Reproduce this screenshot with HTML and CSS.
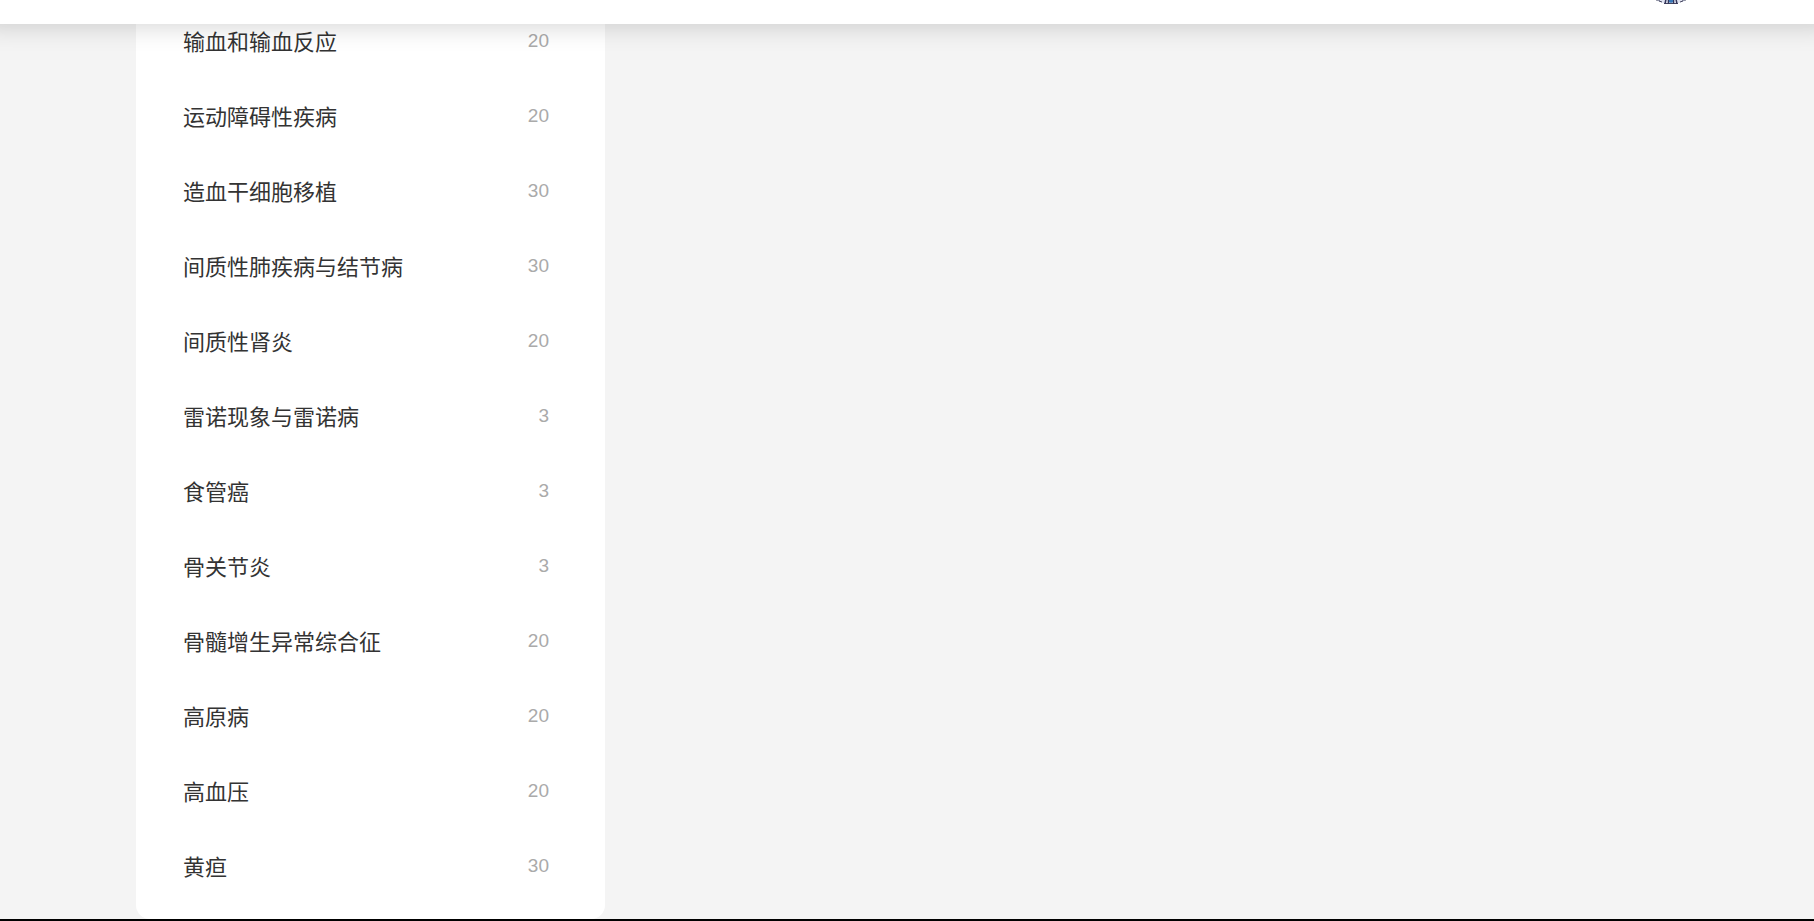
FILE: index.html
```html
<!DOCTYPE html>
<html lang="zh-CN">
<head>
    <meta charset="UTF-8">
    <meta name="viewport" content="width=device-width, initial-scale=1.0">
    <title>疾病分类</title>
    <link rel="stylesheet" href="styles.css">
</head>
<body>
    <header class="topbar">
        <svg class="emblem" width="30" height="30" viewBox="0 0 30 30" aria-hidden="true">
            <path d="M1 0H29V27Q22 30 15 30Q8 30 1 27Z" fill="#dfe2f0"/>
            <path d="M0 26H4M26 26H30M3 27L6 28M27 27L24 28M8 29.500H22" stroke="#45465f" stroke-width="1" fill="none"/>
            <path d="M10 25L9 30M12.500 25V30M17.500 25V30M20 25L21 30" stroke="#34365a" stroke-width="1.500" fill="none"/>
            <path d="M13 24H17V28L15 29L13 28Z" fill="#3a78b8"/>
        </svg>
    </header>
    <main class="page">
        <ul class="category-list">
            <li><a href="#"><span class="name">输血和输血反应</span><span class="count">20</span></a></li>
            <li><a href="#"><span class="name">运动障碍性疾病</span><span class="count">20</span></a></li>
            <li><a href="#"><span class="name">造血干细胞移植</span><span class="count">30</span></a></li>
            <li><a href="#"><span class="name">间质性肺疾病与结节病</span><span class="count">30</span></a></li>
            <li><a href="#"><span class="name">间质性肾炎</span><span class="count">20</span></a></li>
            <li><a href="#"><span class="name">雷诺现象与雷诺病</span><span class="count">3</span></a></li>
            <li><a href="#"><span class="name">食管癌</span><span class="count">3</span></a></li>
            <li><a href="#"><span class="name">骨关节炎</span><span class="count">3</span></a></li>
            <li><a href="#"><span class="name">骨髓增生异常综合征</span><span class="count">20</span></a></li>
            <li><a href="#"><span class="name">高原病</span><span class="count">20</span></a></li>
            <li><a href="#"><span class="name">高血压</span><span class="count">20</span></a></li>
            <li><a href="#"><span class="name">黄疸</span><span class="count">30</span></a></li>
        </ul>
    </main>
    <footer class="footer"></footer>
</body>
</html>
```
FILE: styles.css
```css
body {
    margin: 0;
    background-color: #f4f4f4;
    color: #333;
    font-family: "Liberation Sans", "Noto Sans CJK SC", sans-serif;
}
.topbar {
    position: fixed;
    top: 0;
    left: 0;
    right: 0;
    height: 24px;
    display: flex;
    align-items: flex-end;
    justify-content: flex-end;
    box-sizing: border-box;
    padding: 0 128px 20px 0;
    background-color: #fff;
    box-shadow: 0 -20px 28px 20px rgba(0, 0, 0, 0.2);
    z-index: 10;
}
.emblem {
    flex: none;
}
.page {
    padding: 0 136px;
}
.category-list {
    width: 469px;
    box-sizing: border-box;
    margin: 0;
    padding: 3px 56px 16px 47px;
    list-style: none;
    background-color: #fff;
    border-radius: 0 0 14px 14px;
}
.category-list a {
    display: flex;
    align-items: center;
    justify-content: space-between;
    height: 75px;
    color: #333;
    text-decoration: none;
}
.name {
    padding-bottom: 2px;
    font-size: 22px;
}
.count {
    font-size: 19px;
    color: #aaa;
}
.footer {
    height: 2px;
    background-color: #000;
}
```
